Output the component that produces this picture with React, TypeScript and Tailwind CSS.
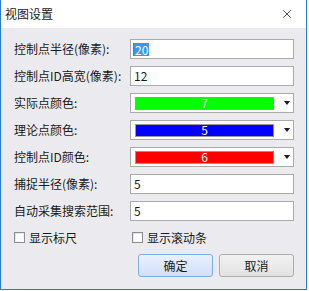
import { X } from "lucide-react";

const font = { fontFamily: '"Noto Sans CJK SC", "Noto Sans", sans-serif' };

function Label({ text }: { text: string }) {
  return <span className="w-[116px] text-[12px] leading-none text-[#1a1a1a]">{text}</span>;
}

function TextRow({ label, value, selected }: { label: string; value: string; selected?: boolean }) {
  return (
    <div className="flex items-center h-[20px]">
      <Label text={label} />
      <div className="w-[164px] h-[20px] bg-white border border-[#ababab] flex items-center pl-[2px] text-[12px] text-[#1a1a1a]">
        {selected ? (
          <span className="bg-[#3399ff] text-white px-[1px] leading-[13px] border-l border-[#c06020]">{value}</span>
        ) : (
          <span className="pl-[1px]">{value}</span>
        )}
      </div>
    </div>
  );
}

function ColorRow({ label, value, color }: { label: string; value: string; color: string }) {
  return (
    <div className="flex items-center h-[20px]">
      <Label text={label} />
      <div className="w-[164px] h-[20px] bg-white border border-[#ababab] flex items-center pl-[4px]">
        <div className={`w-[139px] h-[13px] border border-[#9a9a9a] flex items-center justify-center text-[12px] leading-none text-white ${color}`}>
          {value}
        </div>
        <svg width="6" height="4" viewBox="0 0 6 4" className="ml-[10px]">
          <path d="M0 0h6L3 4z" fill="#1a1a2a" />
        </svg>
      </div>
    </div>
  );
}

function Check({ label }: { label: string }) {
  return (
    <div className="flex items-center gap-[4px]">
      <div className="w-[11px] h-[11px] border border-[#8e8e8e] bg-gradient-to-br from-[#dcdcdc] to-white p-[1px]">
        <div className="w-full h-full bg-white" />
      </div>
      <span className="text-[12px] leading-none text-[#1a1a1a]">{label}</span>
    </div>
  );
}

export default function App() {
  return (
    <div className="w-[309px] h-[291px] bg-white" style={font}>
      <div className="w-[307px] h-[290px] border-x border-b border-[#2b7ad0] flex flex-col">
        {/* title bar */}
        <div className="h-[28px] bg-white flex items-center justify-between pl-[4px] pr-[12px]">
          <span className="text-[12px] text-[#1a1a1a]">视图设置</span>
          <X size={14} strokeWidth={1.3} color="#1a1a1a" />
        </div>

        {/* body */}
        <div className="flex-1 bg-[#ebebef] pl-[13px] pt-[11px] flex flex-col">
          <div className="flex flex-col gap-[7px]">
            <TextRow label="控制点半径(像素):" value="20" selected />
            <TextRow label="控制点ID高宽(像素):" value="12" />
            <ColorRow label="实际点颜色:" value="7" color="bg-[#00ff00]" />
            <ColorRow label="理论点颜色:" value="5" color="bg-[#0000ff]" />
            <ColorRow label="控制点ID颜色:" value="6" color="bg-[#ff0000]" />
            <TextRow label="捕捉半径(像素):" value="5" />
            <TextRow label="自动采集搜索范围:" value="5" />
          </div>

          <div className="flex items-center mt-[11px] h-[11px]">
            <div className="w-[118px]">
              <Check label="显示标尺" />
            </div>
            <Check label="显示滚动条" />
          </div>

          <div className="flex justify-end gap-[6px] mt-[11px] pr-[12px]">
            <button className="w-[75px] h-[23px] rounded-[3px] border border-[#7eaee6] bg-gradient-to-b from-[#eaf1fd] to-[#d0dffa] text-[12px] text-[#1a1a1a]">
              确定
            </button>
            <button className="w-[75px] h-[23px] rounded-[3px] border border-[#acacac] bg-gradient-to-b from-[#f2f2f2] to-[#e2e2e2] text-[12px] text-[#1a1a1a]">
              取消
            </button>
          </div>
        </div>
      </div>
    </div>
  );
}
